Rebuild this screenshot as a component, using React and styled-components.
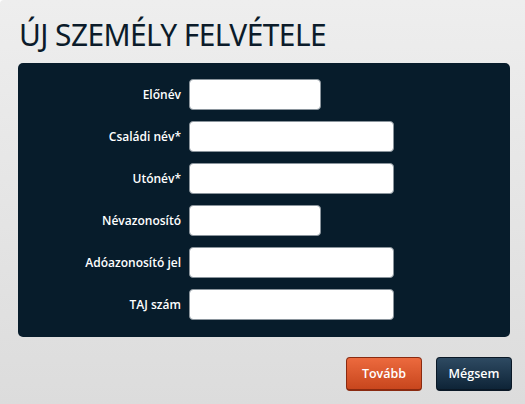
import React from "react";
import styled, { createGlobalStyle } from "styled-components";

const GlobalStyle = createGlobalStyle`
  html, body {
    margin: 0;
    padding: 0;
  }
  body {
    font-family: "Open Sans", "Noto Sans", sans-serif;
  }
`;

const fields = [
  { label: "Előnév", wide: false },
  { label: "Családi név*", wide: true },
  { label: "Utónév*", wide: true },
  { label: "Névazonosító", wide: false },
  { label: "Adóazonosító jel", wide: true },
  { label: "TAJ szám", wide: true },
];

export default function App() {
  return (
    <>
      <GlobalStyle />
      <Page>
        <Title>ÚJ SZEMÉLY FELVÉTELE</Title>
        <Panel>
          {fields.map((f) => (
            <Row key={f.label}>
              <Label>{f.label}</Label>
              <Input $wide={f.wide} />
            </Row>
          ))}
        </Panel>
        <Actions>
          <Button $variant="primary">Tovább</Button>
          <Button>Mégsem</Button>
        </Actions>
      </Page>
    </>
  );
}

const Page = styled.div`
  width: 525px;
  height: 404px;
  box-sizing: border-box;
  padding: 16px 15px 0 18px;
  background: linear-gradient(#eeeeee, #dcdcdc);
  border-top-left-radius: 4px;
  overflow: hidden;
`;

const Title = styled.h1`
  margin: 0 0 0 1px;
  height: 47px;
  font-family: "Noto Sans", sans-serif;
  font-weight: 400;
  font-size: 31px;
  line-height: 36px;
  letter-spacing: -0.6px;
  color: #0b1b2a;
  transform: scaleX(0.965);
  transform-origin: left center;
  white-space: nowrap;
`;

const Panel = styled.div`
  width: 492px;
  height: 274px;
  box-sizing: border-box;
  padding: 16px 0 0;
  background: #071c2b;
  border-radius: 5px;
  display: flex;
  flex-direction: column;
  gap: 11px;
`;

const Row = styled.div`
  display: flex;
  align-items: center;
  height: 31px;
`;

const Label = styled.label`
  width: 163px;
  text-align: right;
  padding-right: 8px;
  font-size: 12px;
  font-weight: 600;
  color: #ffffff;
  white-space: nowrap;
`;

const Input = styled.input`
  width: ${(p) => (p.$wide ? "205px" : "132px")};
  height: 31px;
  box-sizing: border-box;
  border: 1px solid #8a949c;
  border-radius: 4px;
  background: #ffffff;
  outline: none;
  padding: 0 6px;
`;

const Actions = styled.div`
  display: flex;
  justify-content: flex-end;
  gap: 14px;
  margin-top: 20px;
`;

const Button = styled.button`
  width: 76px;
  height: 34px;
  box-sizing: border-box;
  border-radius: 4px;
  font-family: "Open Sans", "Noto Sans", sans-serif;
  font-size: 12.5px;
  font-weight: 600;
  color: #ffffff;
  cursor: pointer;
  border: 1px solid ${(p) => (p.$variant === "primary" ? "#8a2a10" : "#0a1826")};
  border-bottom-width: 2px;
  background: ${(p) =>
    p.$variant === "primary"
      ? "linear-gradient(#ec6a3e, #c8461d)"
      : "linear-gradient(#2e4a62, #0e2437)"};
  margin-right: ${(p) => (p.$variant === "primary" ? "0" : "-2px")};
`;
